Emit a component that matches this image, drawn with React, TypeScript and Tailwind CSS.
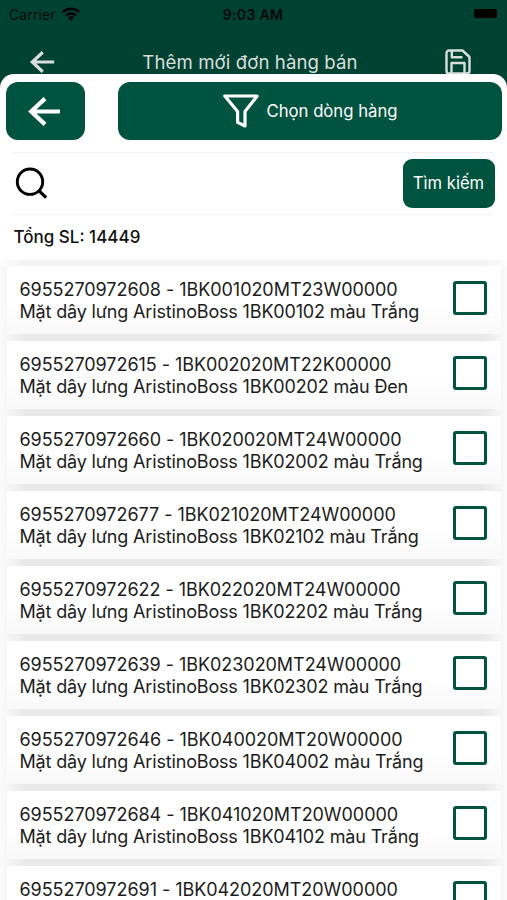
import { useState } from 'react';

interface OrderLine {
  barcode: string;
  sku: string;
  name: string;
}

const GREEN = '#00533e';

const lines: OrderLine[] = [
  { barcode: '6955270972608', sku: '1BK001020MT23W00000', name: 'Mặt dây lưng AristinoBoss 1BK00102 màu Trắng' },
  { barcode: '6955270972615', sku: '1BK002020MT22K00000', name: 'Mặt dây lưng AristinoBoss 1BK00202 màu Đen' },
  { barcode: '6955270972660', sku: '1BK020020MT24W00000', name: 'Mặt dây lưng AristinoBoss 1BK02002 màu Trắng' },
  { barcode: '6955270972677', sku: '1BK021020MT24W00000', name: 'Mặt dây lưng AristinoBoss 1BK02102 màu Trắng' },
  { barcode: '6955270972622', sku: '1BK022020MT24W00000', name: 'Mặt dây lưng AristinoBoss 1BK02202 màu Trắng' },
  { barcode: '6955270972639', sku: '1BK023020MT24W00000', name: 'Mặt dây lưng AristinoBoss 1BK02302 màu Trắng' },
  { barcode: '6955270972646', sku: '1BK040020MT20W00000', name: 'Mặt dây lưng AristinoBoss 1BK04002 màu Trắng' },
  { barcode: '6955270972684', sku: '1BK041020MT20W00000', name: 'Mặt dây lưng AristinoBoss 1BK04102 màu Trắng' },
  { barcode: '6955270972691', sku: '1BK042020MT20W00000', name: '' },
];

function ArrowIcon({ className }: { className: string }) {
  return (
    <svg viewBox="0 0 32 29" className={className} fill="none" stroke="currentColor" strokeWidth="4.2">
      <path d="M32 14.5H3M17 1.6 3.2 14.5 17 27.4" />
    </svg>
  );
}

function WifiIcon() {
  return (
    <svg viewBox="0 0 18 14" className="h-[14px] w-[18px]" fill="none" stroke="black" strokeWidth="2.5">
      <path d="M.9 5.2a11.5 11.5 0 0 1 16.2 0M4 8.6a7.2 7.2 0 0 1 10 0" />
      <path d="M9 13.8 6 10.8a4.3 4.3 0 0 1 6 0z" fill="black" stroke="none" />
    </svg>
  );
}

function SaveIcon() {
  return (
    <svg viewBox="0 0 26 26" className="h-[26px] w-[26px]" fill="none" stroke="currentColor" strokeWidth="2.4" strokeLinejoin="round">
      <path d="M4 1.5h13.5L24.5 8v14a2.5 2.5 0 0 1-2.5 2.5H4A2.5 2.5 0 0 1 1.5 22V4A2.5 2.5 0 0 1 4 1.5z" />
      <path d="M6.8 1.5v6.7h10.7M6.5 24.5V14h13v10.5" />
    </svg>
  );
}

function FilterIcon() {
  return (
    <svg viewBox="0 0 36 34" className="h-[34px] w-[36px]" fill="none" stroke="white" strokeWidth="3.2" strokeLinejoin="round">
      <path d="M1.8 2h32.4L22 17.5V32l-7.4-3.6V17.5z" />
    </svg>
  );
}

function SearchIcon() {
  return (
    <svg viewBox="0 0 32 32" className="h-8 w-8" fill="none" stroke="black" strokeWidth="2.9">
      <circle cx="15" cy="14.7" r="12.7" />
      <path d="m23.9 23.6 7.2 7" strokeWidth="3.2" />
    </svg>
  );
}

function LineCard({ line, checked, onToggle }: { line: OrderLine; checked: boolean; onToggle: () => void }) {
  return (
    <li className="flex h-[68px] shrink-0 justify-between rounded-[2px] bg-linear-to-b from-white from-55% to-[#f9f9f9] pr-[14px] pl-[12.5px]">
      <div className="pt-[13px] text-[18px] leading-[22px] whitespace-nowrap text-[#1c1c1c]">
        <p className="tracking-[-0.05px]">{line.barcode} - {line.sku}</p>
        {line.name && <p className="tracking-[-0.16px]">{line.name}</p>}
      </div>
      <button
        onClick={onToggle}
        aria-pressed={checked}
        className="mt-[15px] h-[34px] w-[34px] rounded-[3px] border-3 border-[#00533e]"
        style={{ backgroundColor: checked ? GREEN : undefined }}
      />
    </li>
  );
}

export default function App() {
  const [selected, setSelected] = useState<string[]>([]);

  const toggle = (barcode: string) =>
    setSelected(prev => (prev.includes(barcode) ? prev.filter(b => b !== barcode) : [...prev, barcode]));

  return (
    <div className="flex h-[900px] w-[507px] flex-col overflow-hidden bg-[#004232] font-['Inter','Liberation_Sans',sans-serif]">
      <div className="grid h-7 shrink-0 grid-cols-[1fr_auto_1fr] items-center pr-[10px] pl-[9px] text-[#020805]">
        <div className="flex items-center gap-[6px]">
          <span className="text-[14px] tracking-[0.1px]">Carrier</span>
          <span className="-mt-[1px]"><WifiIcon /></span>
        </div>
        <span className="text-[14px] font-semibold tracking-[0.3px]">9:03 AM</span>
        <span className="-mt-[2px] h-[9px] w-[23px] justify-self-end rounded-[2px] bg-black" />
      </div>

      <header className="flex h-[46px] shrink-0 items-start justify-between pr-9 pl-[29px] text-[#d9dedc]">
        <ArrowIcon className="mt-[23px] h-[22px] w-[26px]" />
        <h1 className="mt-[22px] text-[18.6px] leading-6 tracking-[0.1px]">Thêm mới đơn hàng bán</h1>
        <span className="mt-[21px]"><SaveIcon /></span>
      </header>

      <main className="flex min-h-0 flex-1 flex-col rounded-t-[14px] bg-white pt-2">
        <div className="flex h-[58px] shrink-0 justify-between pr-[5px] pl-[6px]">
          <button className="flex w-[79px] items-center justify-center rounded-[12px] bg-[#00533e] pr-[3px] text-white">
            <ArrowIcon className="h-[29px] w-8" />
          </button>
          <button className="flex w-[384px] items-center justify-center gap-2 rounded-[12px] bg-[#00533e] text-[16.7px] text-white">
            <FilterIcon />
            <span className="pt-[1px]">Chọn dòng hàng</span>
          </button>
        </div>

        <div className="mx-[13px] mt-3 flex h-[63px] shrink-0 items-center justify-between border-y border-[#f3f3f3] pl-[2px]">
          <span className="-mt-[2px]"><SearchIcon /></span>
          <button className="-mr-[1px] h-[49px] w-[92px] rounded-[9px] bg-[#00533e] pr-[1px] text-[16.6px] whitespace-nowrap text-white">Tìm kiếm</button>
        </div>

        <p className="h-[45px] shrink-0 pl-[13.5px] text-[17px] leading-[45px] font-medium text-[#111]">Tổng SL: 14449</p>

        <ul className="flex min-h-0 flex-1 flex-col gap-[7px] overflow-hidden bg-[linear-gradient(to_right,#fbfbfb,#f6f6f6_7px,#e9e9e9_26px,#e9e9e9_calc(100%-24px),#f6f6f6_calc(100%-6px),#fbfbfb)] pr-[6px] pl-[7px]">
          <li className="-mx-[7px] -mb-[7px] h-[6px] shrink-0 bg-white/45" />
          {lines.map(line => (
            <LineCard
              key={line.barcode}
              line={line}
              checked={selected.includes(line.barcode)}
              onToggle={() => toggle(line.barcode)}
            />
          ))}
        </ul>
      </main>
    </div>
  );
}
